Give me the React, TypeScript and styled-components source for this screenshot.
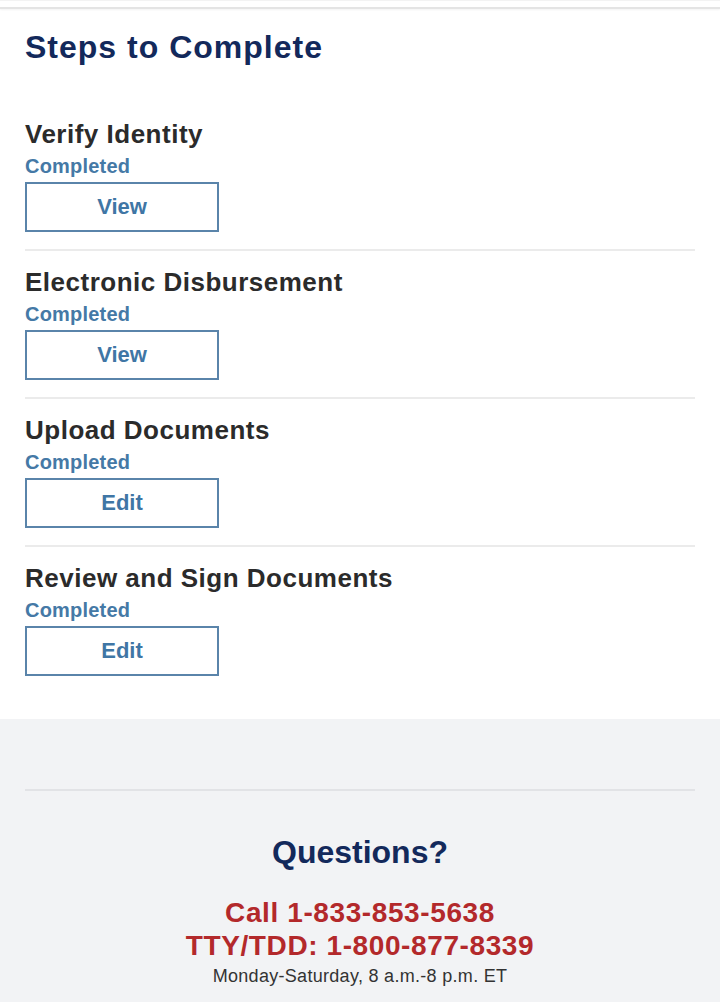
import React from "react";
import styled, { createGlobalStyle } from "styled-components";

const GlobalStyle = createGlobalStyle`
  html, body {
    margin: 0;
    padding: 0;
    background: #ffffff;
  }
  body {
    font-family: "Liberation Sans", Arial, Helvetica, sans-serif;
    -webkit-font-smoothing: antialiased;
  }
`;

type Step = {
  title: string;
  status: string;
  action: string;
};

const steps: Step[] = [
  { title: "Verify Identity", status: "Completed", action: "View" },
  { title: "Electronic Disbursement", status: "Completed", action: "View" },
  { title: "Upload Documents", status: "Completed", action: "Edit" },
  { title: "Review and Sign Documents", status: "Completed", action: "Edit" },
];

const App = () => {
  return (
    <Page>
      <GlobalStyle />
      <TopBar />
      <Main>
        <Heading>Steps to Complete</Heading>
        <StepList>
          {steps.map((step) => (
            <StepItem key={step.title}>
              <StepTitle>{step.title}</StepTitle>
              <StepStatus>{step.status}</StepStatus>
              <ActionButton type="button">{step.action}</ActionButton>
            </StepItem>
          ))}
        </StepList>
      </Main>
      <Footer>
        <FooterRule />
        <FooterHeading>Questions?</FooterHeading>
        <Phone>Call 1-833-853-5638</Phone>
        <Phone>TTY/TDD: 1-800-877-8339</Phone>
        <Hours>Monday-Saturday, 8 a.m.-8 p.m. ET</Hours>
      </Footer>
    </Page>
  );
};

const Page = styled.div`
  width: 720px;
  min-height: 1006px;
  background: #ffffff;
  padding-bottom: 4px;
`;

const TopBar = styled.div`
  box-sizing: border-box;
  height: 9px;
  border-top: 1px solid #f3f3f3;
  border-bottom: 2px solid #e4e4e4;
  box-shadow: 0 1px 2px rgba(0, 0, 0, 0.05);
`;

const Main = styled.main`
  padding: 19px 25px 26px;
`;

const Heading = styled.h1`
  margin: 0 0 37px;
  font-size: 32px;
  line-height: 38px;
  font-weight: 700;
  letter-spacing: 1px;
  color: #13295b;
`;

const StepList = styled.ul`
  list-style: none;
  margin: 0;
  padding: 0;
`;

const StepItem = styled.li`
  display: flex;
  flex-direction: column;
  align-items: flex-start;
  padding: 16px 0 17px;
  border-bottom: 2px solid #ebebeb;

  &:last-child {
    border-bottom: none;
  }
`;

const StepTitle = styled.h2`
  margin: 0;
  font-size: 26px;
  line-height: 30px;
  font-weight: 700;
  letter-spacing: 0.5px;
  color: #2b2b2b;
`;

const StepStatus = styled.span`
  margin-top: 5px;
  font-size: 20px;
  line-height: 24px;
  font-weight: 700;
  letter-spacing: 0.2px;
  color: #4579a6;
`;

const ActionButton = styled.button`
  margin-top: 4px;
  width: 194px;
  height: 50px;
  box-sizing: border-box;
  border: 2px solid #5a84aa;
  background: #ffffff;
  font-family: "Liberation Sans", Arial, sans-serif;
  font-size: 22px;
  font-weight: 700;
  color: #3f76a5;
  cursor: pointer;
`;

const Footer = styled.footer`
  display: flex;
  flex-direction: column;
  align-items: center;
  background: #f2f3f5;
  padding: 70px 25px 15px;
  text-align: center;
`;

const FooterRule = styled.div`
  align-self: stretch;
  height: 2px;
  background: #e2e3e6;
  margin-bottom: 42px;
`;

const FooterHeading = styled.h2`
  margin: 0 0 25px;
  font-size: 32px;
  line-height: 38px;
  font-weight: 700;
  color: #13295b;
`;

const Phone = styled.div`
  font-size: 28px;
  line-height: 33px;
  font-weight: 700;
  letter-spacing: 0.6px;
  color: #b3292b;
`;

const Hours = styled.div`
  margin-top: 3px;
  font-size: 18px;
  line-height: 22px;
  letter-spacing: 0.3px;
  color: #333333;
`;

export default App;
